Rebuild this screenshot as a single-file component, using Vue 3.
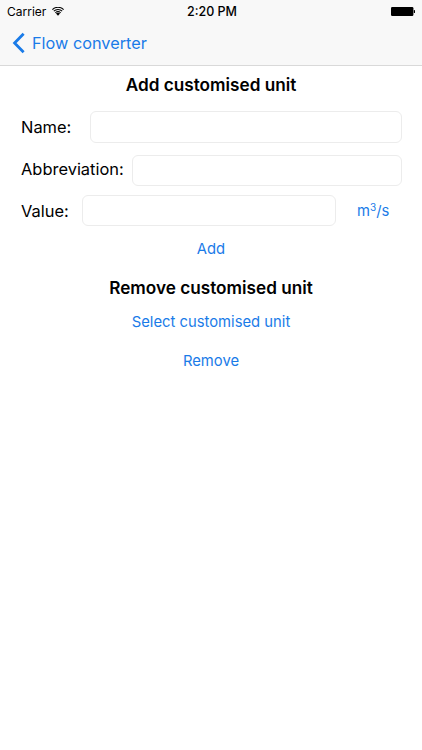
<script setup>
</script>

<template>
  <div class="screen">
    <header class="bar">
      <div class="status">
        <div class="status-left">
          <span>Carrier</span>
          <svg class="wifi" width="12" height="9" viewBox="0 0 14 10.5">
            <path d="M7 10.2 4.7 7.7a3.2 3.2 0 0 1 4.6 0Z" fill="#000" />
            <path d="M3.5 6.4a5 5 0 0 1 7 0l-.8.9a3.8 3.8 0 0 0-5.4 0Z" fill="#000" />
            <path d="M1.7 4.4a7.6 7.6 0 0 1 10.6 0l-.8.9a6.4 6.4 0 0 0-9 0Z" fill="#000" />
            <path d="M0 2.5a10.2 10.2 0 0 1 14 0l-.8.9a9 9 0 0 0-12.4 0Z" fill="#000" />
          </svg>
        </div>
        <span class="time">2:20 PM</span>
        <svg class="battery" width="24" height="9" viewBox="0 0 24 9">
          <rect x="0" y="0" width="22.4" height="9" rx="1.2" fill="#000" />
          <rect x="22.8" y="3" width="1.2" height="3" rx="0.5" fill="#000" />
        </svg>
      </div>
      <div class="nav">
        <svg class="chevron" width="14" height="22" viewBox="0 0 14 22">
          <path d="M11.6 1.8 2.6 11l9 9.2" fill="none" stroke="#1a7be8" stroke-width="2.8" />
        </svg>
        <span class="nav-text">Flow converter</span>
      </div>
    </header>

    <main class="content">
      <h2 class="title first">Add customised unit</h2>
      <div class="row name">
        <label class="label">Name:</label>
        <div class="field"></div>
      </div>
      <div class="row abbr">
        <label class="label">Abbreviation:</label>
        <div class="field"></div>
      </div>
      <div class="row value">
        <label class="label">Value:</label>
        <div class="field"></div>
        <span class="unit link">m<sup class="power">3</sup>/s</span>
      </div>
      <div class="link center add">Add</div>
      <h2 class="title second">Remove customised unit</h2>
      <div class="link center select">Select customised unit</div>
      <div class="link center remove">Remove</div>
    </main>
  </div>
</template>

<style scoped>
.screen {
  width: 422px;
  height: 750px;
  background: #fff;
  font-family: Inter, "Liberation Sans", sans-serif;
  color: #000;
  overflow: hidden;
}
.bar {
  height: 65px;
  background: #f8f8f8;
  border-bottom: 1px solid #d9d9d9;
  display: flex;
  flex-direction: column;
}
.status {
  height: 22px;
  display: flex;
  align-items: center;
  justify-content: space-between;
  padding: 0 7px;
  font-size: 12px;
  position: relative;
}
.status-left {
  display: flex;
  align-items: center;
  gap: 6px;
}
.time {
  font-weight: 500;
  font-size: 12.5px;
  position: absolute;
  left: 2px;
  right: 0;
  text-align: center;
}
.nav {
  flex: 1;
  display: flex;
  align-items: center;
  gap: 6px;
  padding-left: 12px;
  padding-bottom: 1px;
  color: #1a7be8;
  font-size: 16.3px;
}
.nav-text {
  line-height: 20px;
}
.content {
  display: flex;
  flex-direction: column;
}
.title {
  margin: 0;
  font-size: 17.2px;
  font-weight: 600;
  line-height: 20px;
  text-align: center;
}
.first {
  margin-top: 9px;
}
.row {
  display: flex;
  align-items: center;
  padding: 0 20.5px 0 21px;
}
.label {
  font-size: 16.45px;
  white-space: nowrap;
}
.field {
  flex: 1;
  border: 1px solid #ececec;
  border-radius: 6px;
  box-sizing: border-box;
}
.name {
  margin-top: 16px;
}
.name .label {
  width: 69px;
}
.name .field {
  height: 32px;
}
.abbr {
  margin-top: 12px;
}
.abbr .field {
  height: 31px;
}
.abbr .label {
  width: 111px;
  margin-top: -3px;
}
.value {
  margin-top: 9px;
  padding-right: 33px;
}
.value .label {
  width: 61px;
}
.value .field {
  height: 31px;
}
.unit {
  margin-left: 21px;
  width: 32px;
  white-space: nowrap;
}
.power {
  font-size: 10px;
  line-height: 0;
  vertical-align: 5px;
}
.link {
  color: #1a7be8;
  font-size: 14.8px;
  line-height: 18px;
}
.center {
  text-align: center;
}
.add {
  margin-top: 14px;
}
.second {
  margin-top: 20px;
}
.select {
  margin-top: 15px;
}
.remove {
  margin-top: 21px;
}
</style>
